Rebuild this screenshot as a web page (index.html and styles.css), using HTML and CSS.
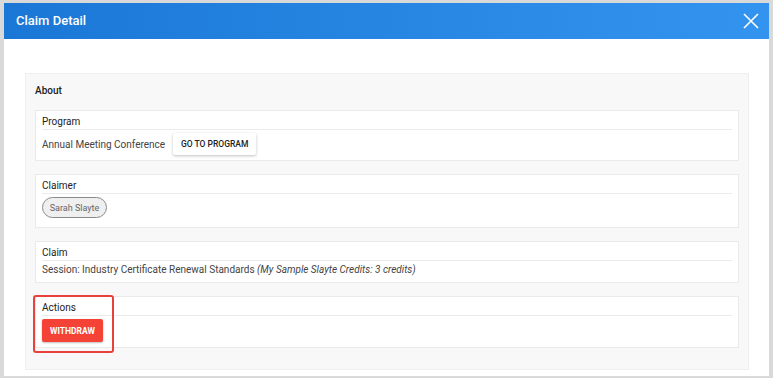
FILE: index.html
```html
<!DOCTYPE html>
<html>
<head>
<meta charset="utf-8">
<link rel="stylesheet" href="styles.css">
</head>
<body>
<div class="frame">
  <div class="dialog-header">
    <span class="dialog-title">Claim Detail</span>
    <svg class="close" width="16" height="16" viewBox="0 0 16 16"><path d="M1 1L15 15M15 1L1 15" stroke="#fff" stroke-width="1.6" fill="none"/></svg>
  </div>
  <div class="dialog-body">
    <div class="panel">
      <div class="panel-title">About</div>
      <div class="card card-program">
        <div class="card-head">Program</div>
        <div class="card-body row">
          <span>Annual Meeting Conference</span>
          <button class="btn-flat">GO TO PROGRAM</button>
        </div>
      </div>
      <div class="card card-claimer">
        <div class="card-head">Claimer</div>
        <div class="card-body">
          <span class="chip">Sarah Slayte</span>
        </div>
      </div>
      <div class="card card-claim">
        <div class="card-head">Claim</div>
        <div class="card-body">Session: Industry Certificate Renewal Standards <em>(My Sample Slayte Credits: 3 credits)</em></div>
      </div>
      <div class="card card-actions">
        <div class="card-head">Actions</div>
        <div class="card-body">
          <button class="btn-danger">WITHDRAW</button>
        </div>
        <div class="highlight"></div>
      </div>
    </div>
  </div>
</div>
</body>
</html>
```
FILE: styles.css
```css
* { box-sizing: border-box; }
html, body { margin: 0; padding: 0; background: #fff; }
body { font-family: Roboto, "Liberation Sans", sans-serif; font-size: 10px; color: #333; }
.frame {
  width: 773px;
  height: 378px;
  border: 4px solid #d9d9d9;
  border-top-width: 3px;
  border-bottom-width: 2px;
  background: #fff;
}
.dialog-header {
  height: 36px;
  background: linear-gradient(to right, #1b77d6, #3394ef);
  display: flex;
  align-items: center;
  justify-content: space-between;
  padding: 0 10px 0 12px;
}
.dialog-title { color: #fff; font-size: 13px; font-weight: 500; position: relative; top: -1px; }
.close { display: block; }
.dialog-body { padding: 34px 20px 0 21px; }
.panel {
  background: #f8f8f8;
  border: 1px solid #efefef;
  padding: 10px 9px 21px 9px;
  display: flex;
  flex-direction: column;
  gap: 13px;
}
.panel-title { font-weight: 500; color: #222; line-height: 14px; margin-bottom: -1px; }
.card {
  background: #fff;
  border: 1px solid #eaeaea;
  padding: 4px 6px 5px 6px;
  position: relative;
}
.card-head {
  line-height: 14px;
  color: #222;
  font-weight: 400;
  border-bottom: 1px solid #ebebeb;
}
.card-body { padding-top: 3px; color: #444; }
.row { display: flex; align-items: center; gap: 8px; }
.btn-flat {
  font-family: Roboto, "Liberation Sans", sans-serif;
  font-size: 8.5px;
  font-weight: 500;
  color: #222;
  background: #fff;
  border: none;
  height: 22px;
  width: 83px;
  padding: 0;
  box-shadow: 0 1px 3px rgba(0,0,0,0.25);
  border-radius: 2px;
}
.card-claimer { padding-bottom: 9px; }
.chip {
  display: inline-flex;
  align-items: center;
  justify-content: center;
  height: 21px;
  width: 65px;
  border: 1px solid #8a8a8a;
  border-radius: 11px;
  background: #efefef;
  color: #666;
  font-size: 9px;
}
.card-claim .card-body { line-height: 16px; padding-top: 1px; padding-bottom: 0; }
.card-claim { padding-bottom: 4px; }
.card-actions { padding-bottom: 5px; }
.btn-danger {
  font-family: Roboto, "Liberation Sans", sans-serif;
  font-size: 8.5px;
  font-weight: 700;
  color: #fff;
  background: #f44336;
  border: none;
  height: 23px;
  width: 61px;
  padding: 0;
  border-radius: 2px;
  box-shadow: 0 1px 2px rgba(0,0,0,0.25);
}
.highlight {
  position: absolute;
  left: -3px;
  top: -2px;
  width: 81px;
  height: 58px;
  border: 2px solid #e8413b;
  border-radius: 3px;
}
```
